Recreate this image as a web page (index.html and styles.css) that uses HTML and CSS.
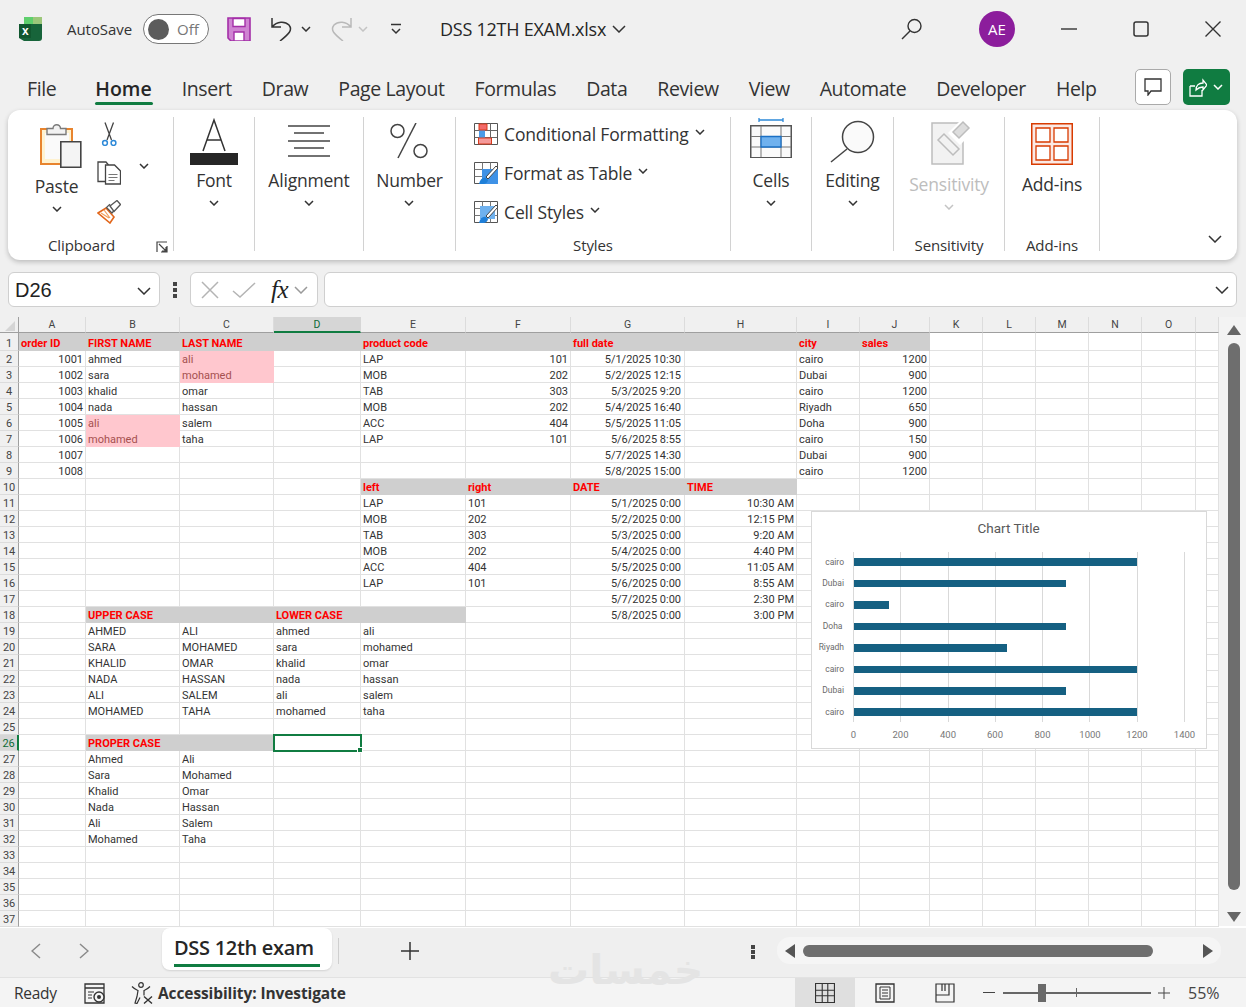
FILE: index.html
```html
<!DOCTYPE html>
<html lang="en">
<head>
<meta charset="utf-8">
<title>DSS 12TH EXAM.xlsx</title>
<link rel="stylesheet" href="styles.css">
</head>
<body>
<header class="titlebar">
  <svg class="logo" viewBox="0 0 24 24"><path d="M5 0h18v12H5z" fill="#5fcf6d"/><path d="M14 0h9v8h-9z" fill="#9cc77a"/><path d="M0 7h23v14a3 3 0 0 1-3 3H5l-5-3z" fill="#17643a"/><path d="M0 7h12v14H0z" fill="#11572f"/><text x="3" y="18" class="logo-x">x</text></svg>
  <span class="autosave">AutoSave</span>
  <span class="toggle"><i class="knob"></i><span>Off</span></span>
  <svg class="qat save" viewBox="0 0 24 24"><path d="M1 1h22v23H4l-3-3z" fill="#cf84d2" stroke="#a42fa8" stroke-width="1.6"/><path d="M6 1.5h12v8H6z" fill="#fff" stroke="#a42fa8" stroke-width="1.4"/><path d="M7 15h10v9H7z" fill="#fff" stroke="#a42fa8" stroke-width="1.4"/></svg>
  <svg class="qat undo" viewBox="0 0 24 24"><path d="M2 1v9h9M2 10c5-6 13-6 17-2 4 5 0 9-9 16" fill="none" stroke="#333" stroke-width="1.5"/></svg>
  <svg class="chev qc1" viewBox="0 0 10 6"><path d="M1 1l4 4 4-4"/></svg>
  <svg class="qat redo" viewBox="0 0 24 24"><path d="M22 1v9h-9M22 10c-5-6-13-6-17-2-4 5 0 9 9 16" fill="none" stroke="#b9b9b9" stroke-width="1.5"/></svg>
  <svg class="chev dim qc2" viewBox="0 0 10 6"><path d="M1 1l4 4 4-4"/></svg>
  <svg class="custom" viewBox="0 0 12 12"><path d="M1 1.5h10M2 6l4 4 4-4" fill="none" stroke="#333" stroke-width="1.5"/></svg>
  <span class="docname">DSS 12TH EXAM.xlsx</span>
  <svg class="chev big-chev" viewBox="0 0 14 8"><path d="M1 1l6 6 6-6"/></svg>
  <svg class="search" viewBox="0 0 22 22"><circle cx="13.5" cy="8" r="6.5" fill="none" stroke="#333" stroke-width="1.4"/><path d="M9 13l-8 8" stroke="#333" stroke-width="1.4"/></svg>
  <span class="avatar">AE</span>
  <svg class="win w-min" viewBox="0 0 16 16"><path d="M0 8h16" stroke="#333" stroke-width="1.4"/></svg>
  <svg class="win w-max" viewBox="0 0 16 16"><rect x="1" y="1" width="14" height="14" rx="2" fill="none" stroke="#333" stroke-width="1.5"/></svg>
  <svg class="win w-close" viewBox="0 0 16 16"><path d="M0.5 0.5l15 15M15.500 0.5l-15 15" stroke="#333" stroke-width="1.4"/></svg>
</header>

<nav class="tabs">
  <a>File</a><a class="on">Home</a><a>Insert</a><a>Draw</a><a>Page Layout</a><a>Formulas</a><a>Data</a><a>Review</a><a>View</a><a>Automate</a><a>Developer</a><a>Help</a>
  <button class="comment"><svg viewBox="0 0 18 18"><path d="M1 1h16v12H7l-3 4v-4H1z" fill="none" stroke="#333" stroke-width="1.3"/></svg></button>
  <button class="share"><svg class="sh" viewBox="0 0 18 20"><path d="M1 9h5M1 9v10h12v-6M7 13c0-5 3-7 7-7V3l4 5-4 5V10c-3 0-5 1-7 3z" fill="none" stroke="#fff" stroke-width="1.3"/></svg><svg class="chev white" viewBox="0 0 10 6"><path d="M1 1l4 4 4-4"/></svg></button>
</nav>

<section class="ribbon">
  <div class="grp g-clip">
    <div class="clip-row">
      <div class="paste">
        <svg class="i-paste" viewBox="38 122 44 47"><path d="M41 129h31v35H41z" fill="#fff2d0" stroke="#e8842e" stroke-width="2"/><path d="M45 133h24v26H45z" fill="#fafafa"/><path d="M47 134.500v-6h6a3.500 3.500 0 0 1 7.500 0h5.500v6z" fill="#f2f2f2" stroke="#7a7a7a" stroke-width="1.400"/><path d="M60.800 141.800h20v25.500h-20z" fill="#f4f4f4" stroke="#444" stroke-width="1.600"/></svg>
        <span class="blabel">Paste</span>
        <svg class="chev" viewBox="0 0 10 6"><path d="M1 1l4 4 4-4"/></svg>
      </div>
      <div class="clip-small">
        <svg class="i-s" viewBox="97 122 24 24"><path d="M105 122.500l6.500 17.500M113.500 122.500L107 140" stroke="#444" stroke-width="1.300" fill="none"/><circle cx="105" cy="143" r="2.400" fill="none" stroke="#2d89d8" stroke-width="1.500"/><circle cx="113.500" cy="143" r="2.400" fill="none" stroke="#2d89d8" stroke-width="1.500"/></svg>
        <svg class="i-s" viewBox="97 161 24 24"><path d="M105 181.500h-7v-19.500h8l2.500 3" fill="none" stroke="#444" stroke-width="1.300"/><path d="M105.500 165h9l6 6v13h-15z" fill="#fff" stroke="#444" stroke-width="1.300"/><path d="M108.500 174.500h9M108.500 177.500h9M108.500 180.500h6" stroke="#777"/></svg>
        <svg class="i-s" viewBox="97 199 24 24"><path d="M98 212l8-5 8 9-4 6z" fill="#fff" stroke="#e2661a" stroke-width="1.600"/><path d="M101 212l8 5M104 209l6 8" stroke="#f0a060" stroke-width="1.200"/><path d="M106.500 206.500l3-3 5 5.500-2.500 3z" fill="#fff" stroke="#555" stroke-width="1.200"/><path d="M110 205l7-5.500 3.500 4-6.500 7z" fill="#fff" stroke="#555" stroke-width="1.300"/></svg>
      </div>
      <svg class="chev clip-chev" viewBox="0 0 10 6"><path d="M1 1l4 4 4-4"/></svg>
    </div>
    <span class="glabel clip-label">Clipboard</span>
    <svg class="launch" viewBox="0 0 12 12"><path d="M1 11V1h10M11 5v6H5M3 3l7 7M10 6v4H6" fill="none" stroke="#444" stroke-width="1.200"/></svg>
  </div>

  <div class="grp g-font">
    <div class="bigbtn">
      <svg class="i-font" viewBox="0 0 48 47"><path d="M13 33L24 2l11 31M17 22h14" fill="none" stroke="#333" stroke-width="1.500"/><rect y="35" width="48" height="12" fill="#262626"/></svg>
      <span class="blabel">Font</span>
      <svg class="chev" viewBox="0 0 10 6"><path d="M1 1l4 4 4-4"/></svg>
    </div>
  </div>

  <div class="grp g-align">
    <div class="bigbtn">
      <svg class="i-align" viewBox="0 0 42 32"><path d="M0 1h42M6 8h30M0 16h42M6 23h30M0 31h42" stroke="#444" stroke-width="1.300"/></svg>
      <span class="blabel">Alignment</span>
      <svg class="chev" viewBox="0 0 10 6"><path d="M1 1l4 4 4-4"/></svg>
    </div>
  </div>

  <div class="grp g-num">
    <div class="bigbtn">
      <svg class="i-num" viewBox="0 0 38 36"><circle cx="7.500" cy="8" r="6.500" fill="none" stroke="#444" stroke-width="1.500"/><circle cx="30.500" cy="28" r="6.500" fill="none" stroke="#444" stroke-width="1.500"/><path d="M26 0L8 35" stroke="#444" stroke-width="1.500"/></svg>
      <span class="blabel">Number</span>
      <svg class="chev" viewBox="0 0 10 6"><path d="M1 1l4 4 4-4"/></svg>
    </div>
  </div>

  <div class="grp g-styles">
    <div class="style-list">
      <div class="sitem">
        <svg class="i-st" viewBox="0 0 24 22"><path d="M.5.500h23v21H.5z" fill="#fff" stroke="#555"/><path d="M8.500.5v21M16.500.5v21M.5 7.500h23M.5 14.500h23" stroke="#666"/><path d="M5 4h6v14H5z" fill="#4a9be8"/><path d="M5 1h8v6H5z" fill="#f26a6a" stroke="#d83b1c"/><path d="M4.500 15h13v6h-13z" fill="#f59a9a" stroke="#d83b1c"/></svg>
        <span>Conditional Formatting</span>
        <svg class="chev" viewBox="0 0 10 6"><path d="M1 1l4 4 4-4"/></svg>
      </div>
      <div class="sitem">
        <svg class="i-st" viewBox="0 0 24 22"><path d="M.5.500h23v21H.5z" fill="#fff" stroke="#555"/><path d="M8.500.5v21M16.500.5v21M.5 7.500h23M.5 14.500h23" stroke="#777"/><path d="M8 7h16v15H8z" fill="#3f92e6"/><path d="M12 15L22 4l2 2-10 11z" fill="#fff" stroke="#444"/><path d="M5 22c1-5 4-7 7-6l2 2c0 3-4 5-9 4z" fill="#1f7fd8"/></svg>
        <span>Format as Table</span>
        <svg class="chev" viewBox="0 0 10 6"><path d="M1 1l4 4 4-4"/></svg>
      </div>
      <div class="sitem">
        <svg class="i-st" viewBox="0 0 24 22"><path d="M.5.500h23v21H.5z" fill="#fff" stroke="#555"/><path d="M8.500.5v21M16.500.5v21M.5 7.500h23M.5 14.500h23" stroke="#777"/><path d="M6 5h15v13H6z" fill="#6fb1ee"/><path d="M12 15L22 4l2 2-10 11z" fill="#fff" stroke="#444"/><path d="M5 22c1-5 4-7 7-6l2 2c0 3-4 5-9 4z" fill="#1f7fd8"/></svg>
        <span>Cell Styles</span>
        <svg class="chev" viewBox="0 0 10 6"><path d="M1 1l4 4 4-4"/></svg>
      </div>
    </div>
    <span class="glabel">Styles</span>
  </div>

  <div class="grp g-cells">
    <div class="bigbtn">
      <svg class="i-cells" viewBox="0 0 42 41"><path d="M9 3h24M9 1v4M33 1v4" stroke="#2d89d8" stroke-width="1.300"/><path d="M.75 8.750h40.500v32H.75z" fill="#fafafa" stroke="#555" stroke-width="1.500"/><path d="M11 9v31M31 9v31M1 19.500h40M1 30h40" stroke="#777"/><path d="M11 19.500h20V30H11z" fill="#6fb1ee" stroke="#1a6fc4" stroke-width="1.300"/></svg>
      <span class="blabel">Cells</span>
      <svg class="chev" viewBox="0 0 10 6"><path d="M1 1l4 4 4-4"/></svg>
    </div>
  </div>

  <div class="grp g-edit">
    <div class="bigbtn">
      <svg class="i-edit" viewBox="0 0 46 43"><circle cx="28" cy="17" r="15.500" fill="#fafafa" stroke="#444" stroke-width="1.500"/><path d="M17 29L1 42" stroke="#444" stroke-width="1.500"/></svg>
      <span class="blabel">Editing</span>
      <svg class="chev" viewBox="0 0 10 6"><path d="M1 1l4 4 4-4"/></svg>
    </div>
  </div>

  <div class="grp g-sens">
    <div class="bigbtn lower">
      <svg class="i-sens" viewBox="0 0 42 45"><path d="M1 3h31v41H1z" fill="#f2f2f2" stroke="#bdbdbd" stroke-width="1.500"/><path d="M7 20l6-6 15 15-6 6z" fill="none" stroke="#bdbdbd" stroke-width="1.500"/><path d="M17 13l13-13 12 12-13 13z" fill="#fff"/><path d="M22 12L32 2l6 6-10 10z" fill="#ddd" stroke="#bdbdbd" stroke-width="1.500"/></svg>
      <span class="blabel muted">Sensitivity</span>
      <svg class="chev dim" viewBox="0 0 10 6"><path d="M1 1l4 4 4-4"/></svg>
    </div>
    <span class="glabel">Sensitivity</span>
  </div>

  <div class="grp g-add">
    <div class="bigbtn lower">
      <svg class="i-add" viewBox="0 0 42 42"><rect x=".75" y=".75" width="40.500" height="40.500" fill="#fbe9e4" stroke="#d83b01" stroke-width="1.500"/><path d="M5 5h14v14H5zM23 5h14v14H23zM5 23h14v14H5zM23 23h14v14H23z" fill="#fff" stroke="#d83b01" stroke-width="1.300"/></svg>
      <span class="blabel">Add-ins</span>
    </div>
    <span class="glabel">Add-ins</span>
  </div>
  <svg class="chev collapse" viewBox="0 0 14 8"><path d="M1 1l6 6 6-6"/></svg>
</section>

<section class="formula">
  <div class="namebox"><span>D26</span><svg class="chev fchev" viewBox="0 0 14 8"><path d="M1 1l6 6 6-6"/></svg></div>
  <span class="vdots"><i></i><i></i><i></i></span>
  <div class="fxbox">
    <svg class="fx-x" viewBox="0 0 18 18"><path d="M1 1l16 16M17 1L1 17" stroke="#b4b4b4" stroke-width="1.500"/></svg>
    <svg class="fx-c" viewBox="0 0 24 16"><path d="M1 9l7 6L23 1" fill="none" stroke="#b4b4b4" stroke-width="1.500"/></svg>
    <span class="fx-t">fx</span>
    <svg class="chev dim2" viewBox="0 0 14 8"><path d="M1 1l6 6 6-6"/></svg>
  </div>
  <div class="finput"><svg class="chev fchev" viewBox="0 0 14 8"><path d="M1 1l6 6 6-6"/></svg></div>
</section>

<section class="sheet">
  <table class="grid">
    <colgroup><col class="c0"><col class="ca"><col class="cb"><col class="cc"><col class="cd"><col class="ce"><col class="cf"><col class="cg"><col class="ch"><col class="ci"><col class="cj"><col class="ck"><col class="cl"><col class="cm"><col class="cn"><col class="co"><col class="cp"></colgroup>
    <thead><tr><th class="corner"><svg viewBox="0 0 10 10"><path d="M10 0v10H0z" fill="#d5d5d5"/></svg></th><th>A</th><th>B</th><th>C</th><th class="sel">D</th><th>E</th><th>F</th><th>G</th><th>H</th><th>I</th><th>J</th><th>K</th><th>L</th><th>M</th><th>N</th><th>O</th><th></th></tr></thead>
    <tbody>
      <tr class="first"><th>1</th><td class="h">order ID</td><td class="h">FIRST NAME</td><td class="h">LAST NAME</td><td class="h"></td><td class="h">product code</td><td class="h"></td><td class="h">full date</td><td class="h"></td><td class="h">city</td><td class="h">sales</td><td></td><td></td><td></td><td></td><td></td><td></td></tr>
      <tr><th>2</th><td class="n">1001</td><td>ahmed</td><td class="p">ali</td><td></td><td>LAP</td><td class="n">101</td><td class="n">5/1/2025 10:30</td><td></td><td>cairo</td><td class="n">1200</td><td></td><td></td><td></td><td></td><td></td><td></td></tr>
      <tr><th>3</th><td class="n">1002</td><td>sara</td><td class="p">mohamed</td><td></td><td>MOB</td><td class="n">202</td><td class="n">5/2/2025 12:15</td><td></td><td>Dubai</td><td class="n">900</td><td></td><td></td><td></td><td></td><td></td><td></td></tr>
      <tr><th>4</th><td class="n">1003</td><td>khalid</td><td>omar</td><td></td><td>TAB</td><td class="n">303</td><td class="n">5/3/2025 9:20</td><td></td><td>cairo</td><td class="n">1200</td><td></td><td></td><td></td><td></td><td></td><td></td></tr>
      <tr><th>5</th><td class="n">1004</td><td>nada</td><td>hassan</td><td></td><td>MOB</td><td class="n">202</td><td class="n">5/4/2025 16:40</td><td></td><td>Riyadh</td><td class="n">650</td><td></td><td></td><td></td><td></td><td></td><td></td></tr>
      <tr><th>6</th><td class="n">1005</td><td class="p">ali</td><td>salem</td><td></td><td>ACC</td><td class="n">404</td><td class="n">5/5/2025 11:05</td><td></td><td>Doha</td><td class="n">900</td><td></td><td></td><td></td><td></td><td></td><td></td></tr>
      <tr><th>7</th><td class="n">1006</td><td class="p">mohamed</td><td>taha</td><td></td><td>LAP</td><td class="n">101</td><td class="n">5/6/2025 8:55</td><td></td><td>cairo</td><td class="n">150</td><td></td><td></td><td></td><td></td><td></td><td></td></tr>
      <tr><th>8</th><td class="n">1007</td><td></td><td></td><td></td><td></td><td></td><td class="n">5/7/2025 14:30</td><td></td><td>Dubai</td><td class="n">900</td><td></td><td></td><td></td><td></td><td></td><td></td></tr>
      <tr><th>9</th><td class="n">1008</td><td></td><td></td><td></td><td></td><td></td><td class="n">5/8/2025 15:00</td><td></td><td>cairo</td><td class="n">1200</td><td></td><td></td><td></td><td></td><td></td><td></td></tr>
      <tr><th>10</th><td></td><td></td><td></td><td></td><td class="h">left</td><td class="h">right</td><td class="h">DATE</td><td class="h">TIME</td><td></td><td></td><td></td><td></td><td></td><td></td><td></td><td></td></tr>
      <tr><th>11</th><td></td><td></td><td></td><td></td><td>LAP</td><td>101</td><td class="n">5/1/2025 0:00</td><td class="n">10:30 AM</td><td></td><td></td><td></td><td></td><td></td><td></td><td></td><td></td></tr>
      <tr><th>12</th><td></td><td></td><td></td><td></td><td>MOB</td><td>202</td><td class="n">5/2/2025 0:00</td><td class="n">12:15 PM</td><td></td><td></td><td></td><td></td><td></td><td></td><td></td><td></td></tr>
      <tr><th>13</th><td></td><td></td><td></td><td></td><td>TAB</td><td>303</td><td class="n">5/3/2025 0:00</td><td class="n">9:20 AM</td><td></td><td></td><td></td><td></td><td></td><td></td><td></td><td></td></tr>
      <tr><th>14</th><td></td><td></td><td></td><td></td><td>MOB</td><td>202</td><td class="n">5/4/2025 0:00</td><td class="n">4:40 PM</td><td></td><td></td><td></td><td></td><td></td><td></td><td></td><td></td></tr>
      <tr><th>15</th><td></td><td></td><td></td><td></td><td>ACC</td><td>404</td><td class="n">5/5/2025 0:00</td><td class="n">11:05 AM</td><td></td><td></td><td></td><td></td><td></td><td></td><td></td><td></td></tr>
      <tr><th>16</th><td></td><td></td><td></td><td></td><td>LAP</td><td>101</td><td class="n">5/6/2025 0:00</td><td class="n">8:55 AM</td><td></td><td></td><td></td><td></td><td></td><td></td><td></td><td></td></tr>
      <tr><th>17</th><td></td><td></td><td></td><td></td><td></td><td></td><td class="n">5/7/2025 0:00</td><td class="n">2:30 PM</td><td></td><td></td><td></td><td></td><td></td><td></td><td></td><td></td></tr>
      <tr><th>18</th><td></td><td class="h">UPPER CASE</td><td class="h"></td><td class="h">LOWER CASE</td><td class="h"></td><td></td><td class="n">5/8/2025 0:00</td><td class="n">3:00 PM</td><td></td><td></td><td></td><td></td><td></td><td></td><td></td><td></td></tr>
      <tr><th>19</th><td></td><td>AHMED</td><td>ALI</td><td>ahmed</td><td>ali</td><td></td><td></td><td></td><td></td><td></td><td></td><td></td><td></td><td></td><td></td><td></td></tr>
      <tr><th>20</th><td></td><td>SARA</td><td>MOHAMED</td><td>sara</td><td>mohamed</td><td></td><td></td><td></td><td></td><td></td><td></td><td></td><td></td><td></td><td></td><td></td></tr>
      <tr><th>21</th><td></td><td>KHALID</td><td>OMAR</td><td>khalid</td><td>omar</td><td></td><td></td><td></td><td></td><td></td><td></td><td></td><td></td><td></td><td></td><td></td></tr>
      <tr><th>22</th><td></td><td>NADA</td><td>HASSAN</td><td>nada</td><td>hassan</td><td></td><td></td><td></td><td></td><td></td><td></td><td></td><td></td><td></td><td></td><td></td></tr>
      <tr><th>23</th><td></td><td>ALI</td><td>SALEM</td><td>ali</td><td>salem</td><td></td><td></td><td></td><td></td><td></td><td></td><td></td><td></td><td></td><td></td><td></td></tr>
      <tr><th>24</th><td></td><td>MOHAMED</td><td>TAHA</td><td>mohamed</td><td>taha</td><td></td><td></td><td></td><td></td><td></td><td></td><td></td><td></td><td></td><td></td><td></td></tr>
      <tr><th>25</th><td></td><td></td><td></td><td></td><td></td><td></td><td></td><td></td><td></td><td></td><td></td><td></td><td></td><td></td><td></td><td></td></tr>
      <tr><th class="sel-row">26</th><td></td><td class="h">PROPER CASE</td><td class="h"></td><td class="active"></td><td></td><td></td><td></td><td></td><td></td><td></td><td></td><td></td><td></td><td></td><td></td><td></td></tr>
      <tr><th>27</th><td></td><td>Ahmed</td><td>Ali</td><td></td><td></td><td></td><td></td><td></td><td></td><td></td><td></td><td></td><td></td><td></td><td></td><td></td></tr>
      <tr><th>28</th><td></td><td>Sara</td><td>Mohamed</td><td></td><td></td><td></td><td></td><td></td><td></td><td></td><td></td><td></td><td></td><td></td><td></td><td></td></tr>
      <tr><th>29</th><td></td><td>Khalid</td><td>Omar</td><td></td><td></td><td></td><td></td><td></td><td></td><td></td><td></td><td></td><td></td><td></td><td></td><td></td></tr>
      <tr><th>30</th><td></td><td>Nada</td><td>Hassan</td><td></td><td></td><td></td><td></td><td></td><td></td><td></td><td></td><td></td><td></td><td></td><td></td><td></td></tr>
      <tr><th>31</th><td></td><td>Ali</td><td>Salem</td><td></td><td></td><td></td><td></td><td></td><td></td><td></td><td></td><td></td><td></td><td></td><td></td><td></td></tr>
      <tr><th>32</th><td></td><td>Mohamed</td><td>Taha</td><td></td><td></td><td></td><td></td><td></td><td></td><td></td><td></td><td></td><td></td><td></td><td></td><td></td></tr>
      <tr><th>33</th><td></td><td></td><td></td><td></td><td></td><td></td><td></td><td></td><td></td><td></td><td></td><td></td><td></td><td></td><td></td><td></td></tr>
      <tr><th>34</th><td></td><td></td><td></td><td></td><td></td><td></td><td></td><td></td><td></td><td></td><td></td><td></td><td></td><td></td><td></td><td></td></tr>
      <tr><th>35</th><td></td><td></td><td></td><td></td><td></td><td></td><td></td><td></td><td></td><td></td><td></td><td></td><td></td><td></td><td></td><td></td></tr>
      <tr><th>36</th><td></td><td></td><td></td><td></td><td></td><td></td><td></td><td></td><td></td><td></td><td></td><td></td><td></td><td></td><td></td><td></td></tr>
      <tr><th>37</th><td></td><td></td><td></td><td></td><td></td><td></td><td></td><td></td><td></td><td></td><td></td><td></td><td></td><td></td><td></td><td></td></tr>
    </tbody>
  </table>

  <svg class="chart" viewBox="811 511 396 238">
    <rect x="811.500" y="511.500" width="395" height="237" fill="#fff" stroke="#d9d9d9"/>
    <text x="1008.500" y="533" class="ct">Chart Title</text>
    <g stroke="#d9d9d9">
      <path d="M853.500 552v170M900.500 552v170M948.500 552v170M995.500 552v170M1042.500 552v170M1089.500 552v170M1137.500 552v170M1184.500 552v170"/>
    </g>
    <g fill="#156082">
      <rect x="854" y="558" width="283" height="8"/>
      <rect x="854" y="580" width="212" height="7"/>
      <rect x="854" y="601" width="35" height="8"/>
      <rect x="854" y="623" width="212" height="7"/>
      <rect x="854" y="644" width="153" height="8"/>
      <rect x="854" y="666" width="283" height="7"/>
      <rect x="854" y="687" width="212" height="8"/>
      <rect x="854" y="708" width="283" height="8"/>
    </g>
    <g class="cy">
      <text x="844" y="565">cairo</text><text x="844" y="586">Dubai</text><text x="844" y="607">cairo</text><text x="842.500" y="629">Doha</text><text x="844" y="650">Riyadh</text><text x="844" y="672">cairo</text><text x="844" y="693">Dubai</text><text x="844" y="715">cairo</text>
    </g>
    <g class="cx">
      <text x="853.500" y="738">0</text><text x="900.500" y="738">200</text><text x="948" y="738">400</text><text x="995" y="738">600</text><text x="1042.500" y="738">800</text><text x="1090" y="738">1000</text><text x="1137" y="738">1200</text><text x="1184.500" y="738">1400</text>
    </g>
  </svg>

  <aside class="vscroll">
    <svg class="arrow" viewBox="0 0 14 10"><path d="M7 0l7 10H0z"/></svg>
    <i class="vthumb"></i>
    <svg class="arrow" viewBox="0 0 14 10"><path d="M7 10L0 0h14z"/></svg>
  </aside>
</section>

<section class="tabbar">
  <svg class="nav n1" viewBox="0 0 10 16"><path d="M9 1L1 8l8 7" fill="none" stroke="#8a8a8a" stroke-width="1.500"/></svg>
  <svg class="nav n2" viewBox="0 0 10 16"><path d="M1 1l8 7-8 7" fill="none" stroke="#8a8a8a" stroke-width="1.500"/></svg>
  <div class="sheettab"><span>DSS 12th exam</span></div>
  <i class="tabsep"></i>
  <svg class="plus" viewBox="0 0 18 18"><path d="M9 0v18M0 9h18" stroke="#333" stroke-width="1.500"/></svg>
  <span class="wm">خمسات</span>
  <span class="vdots v2"><i></i><i></i><i></i></span>
  <div class="hscroll">
    <svg class="harrow" viewBox="0 0 10 14"><path d="M0 7l10-7v14z"/></svg>
    <i class="hthumb"></i>
    <svg class="harrow" viewBox="0 0 10 14"><path d="M10 7L0 14V0z"/></svg>
  </div>
</section>

<footer class="status">
  <span class="ready">Ready</span>
  <svg class="st-ic macro" viewBox="0 0 22 22"><path d="M1 2h19v19H1zM1 6h19" fill="none" stroke="#333" stroke-width="1.300"/><path d="M4 10h6M4 13h4M4 16h4" stroke="#333"/><circle cx="15" cy="15" r="5" fill="#f3f3f3" stroke="#333" stroke-width="1.400"/><circle cx="15" cy="15" r="2" fill="#333"/></svg>
  <svg class="st-ic acc" viewBox="0 0 22 22"><circle cx="10" cy="3" r="2.300" fill="none" stroke="#333" stroke-width="1.200"/><path d="M1 4.500c3 3 5 3.500 6 4l-1 6-2 6.500 2 .5 3-6M19 4.500c-3 3-5 3.500-6 4v5" fill="none" stroke="#333" stroke-width="1.200"/><path d="M13 14.500l8 7M21 14.500l-8 7" stroke="#333" stroke-width="1.400"/></svg>
  <strong class="acc-t">Accessibility: Investigate</strong>
  <div class="views">
    <span class="view on"><svg viewBox="0 0 18 18"><path d="M.5.500h17v17H.5zM6.500.5v17M11.500.5v17M.5 6.500h17M.5 11.500h17" fill="none" stroke="#333"/></svg></span>
    <span class="view"><svg viewBox="0 0 20 20"><path d="M1 1h18v18H1z" fill="none" stroke="#333" stroke-width="1.300"/><path d="M5 4h10v12H5z" fill="none" stroke="#333"/><path d="M7 7h6M7 10h6M7 13h6" stroke="#333"/></svg></span>
    <span class="view"><svg viewBox="0 0 20 20"><path d="M1 1h18v18H1zM1 12h13V1M7 1v7M10 1v7" fill="none" stroke="#333" stroke-width="1.200"/></svg></span>
  </div>
  <div class="zoom">
    <i class="zm"></i>
    <div class="slider"><i class="sthumb"></i><i class="stick"></i></div>
    <svg class="zp" viewBox="0 0 12 12"><path d="M6 0v12M0 6h12" stroke="#444"/></svg>
    <span class="pct">55%</span>
  </div>
</footer>
</body>
</html>
```

FILE: styles.css
```css
* { box-sizing: border-box; }
html, body { margin: 0; padding: 0; }
body {
  width: 1246px; height: 1007px; overflow: hidden; background: #f0f0f0;
  font-family: "Open Sans", "Noto Sans", sans-serif; color: #262626;
  display: flex; flex-direction: column; position: relative;
}
.chev { width: 10px; height: 6px; fill: none; stroke: #333; stroke-width: 1.500; flex: none; display: block; }
.chev.dim { stroke: #c4c4c4; }
.chev.dim2 { stroke: #9a9a9a; width: 14px; height: 8px; margin-left: 6px; }
.chev.white { stroke: #fff; }

/* title bar */
.titlebar { height: 58px; display: flex; align-items: center; flex: none; }
.logo { width: 24px; height: 24px; margin-left: 19px; margin-top: 0; }
.logo-x { font: 700 12px "Liberation Sans", sans-serif; fill: #fff; }
.autosave { margin-left: 24px; font-size: 15px; color: #333; letter-spacing: -.05px; width: 76px; }
.toggle { width: 66px; height: 30px; border: 1px solid #777; border-radius: 15px; background: #fff; display: flex; align-items: center; padding-left: 4px; font-size: 15px; color: #777; }
.toggle span { margin-left: 8px; }
.knob { width: 21px; height: 21px; border-radius: 50%; background: #5c5c5c; }
.qat { width: 24px; height: 24px; }
.save { margin-left: 18px; }
.undo { margin-left: 19px; }
.qc1 { margin-left: 7px; }
.redo { margin-left: 18px; }
.qc2 { margin-left: 5px; }
.custom { width: 12px; height: 12px; margin-left: 22px; }
.docname { margin-left: 38px; font-size: 18px; letter-spacing: -.25px; color: #262626; width: 172px; white-space: nowrap; }
.big-chev { width: 14px; height: 8px; }
.search { width: 22px; height: 22px; margin-left: 275px; }
.avatar { width: 36px; height: 36px; border-radius: 50%; background: #8c1d9c; color: #fff; font-size: 15px; display: flex; align-items: center; justify-content: center; margin-left: 56px; margin-top: 0; }
.win { width: 16px; height: 16px; }
.w-min { margin-left: 46px; }
.w-max { margin-left: 56px; }
.w-close { margin-left: 56px; }

/* tabs */
.tabs { height: 52px; display: flex; align-items: center; flex: none; padding: 15px 0 5px 27px; gap: 30px; font-size: 19.500px; color: #333; }
.tabs a { position: relative; line-height: 30px; letter-spacing: -.4px; white-space: nowrap; }
.tabs a.on { font-weight: 600; color: #262626; margin-left: 9px; letter-spacing: 0; }
.tabs a.on::after { content: ""; position: absolute; left: 0; right: -1px; bottom: -1px; height: 3px; background: #107c41; border-radius: 2px; }
.comment, .share { height: 36px; padding: 0; display: flex; align-items: center; justify-content: center; border-radius: 5px; margin-top: -4px; }
.comment { width: 36px; background: #fff; border: 1px solid #aaa; margin-left: 8px; }
.comment svg { width: 18px; height: 18px; }
.share { width: 47px; background: #107c41; border: 0; margin-left: -18px; gap: 6px; }
.sh { width: 18px; height: 20px; }

/* ribbon */
.ribbon { height: 150px; margin: 0 9px 0 8px; background: #fff; border-radius: 12px; box-shadow: 0 2px 5px rgba(0,0,0,.22); display: flex; flex: none; position: relative; }
.grp { height: 134px; margin-top: 7px; border-right: 1px solid #d2d2d2; display: flex; flex-direction: column; align-items: center; position: relative; flex: none; font-size: 17.500px; }
.glabel { margin-top: auto; margin-bottom: -4px; height: 20px; line-height: 20px; font-size: 15px; color: #333; white-space: nowrap; letter-spacing: -.1px; }
.clip-label { margin-right: 18px; }
.blabel { line-height: 24px; color: #333; white-space: nowrap; letter-spacing: -.2px; }
.blabel.muted { color: #bdbdbd; }
.bigbtn { display: flex; flex-direction: column; align-items: center; }
.bigbtn .chev { margin-top: 8px; }
.g-clip { width: 166px; }
.g-font { width: 81px; }
.g-align { width: 109px; }
.g-num { width: 92px; }
.g-styles { width: 275px; }
.g-cells { width: 81px; }
.g-edit { width: 82px; }
.g-sens { width: 111px; }
.g-add { width: 95px; }
.clip-row { display: flex; width: 100%; padding-left: 8px; }
.paste { width: 81px; display: flex; flex-direction: column; align-items: center; padding-top: 5px; }
.i-paste { width: 44px; height: 47px; margin-left: 7px; }
.paste .blabel { margin-top: 5px; }
.paste .chev { margin-top: 8px; }
.clip-small { display: flex; flex-direction: column; padding-top: 5px; gap: 15px; }
.i-s { width: 24px; height: 24px; display: block; }
.clip-chev { margin-left: 18px; margin-top: 46px; }
.launch { position: absolute; right: 5px; bottom: -2px; width: 12px; height: 12px; }
.i-font { width: 48px; height: 47px; margin-top: 1px; margin-bottom: 3px; }
.i-align { width: 42px; height: 32px; margin-top: 8px; margin-bottom: 11px; }
.i-num { width: 38px; height: 36px; margin-top: 6px; margin-bottom: 9px; }
.i-cells { width: 42px; height: 41px; margin-top: 0; margin-bottom: 10px; }
.i-edit { width: 46px; height: 43px; margin-top: 3px; margin-bottom: 5px; }
.i-sens { width: 42px; height: 45px; margin-top: 3px; margin-bottom: 7px; margin-left: 7px; }
.i-add { width: 42px; height: 42px; margin-top: 6px; margin-bottom: 7px; }
.style-list { align-self: flex-start; padding: 3px 0 0 18px; display: flex; flex-direction: column; gap: 12px; }
.sitem { display: flex; align-items: center; height: 27px; font-size: 17.500px; color: #333; letter-spacing: -.14px; white-space: nowrap; }
.i-st { width: 24px; height: 22px; margin-right: 6px; }
.sitem .chev { margin-left: 6px; margin-top: -3px; }
.collapse { position: absolute; right: 15px; bottom: 17px; width: 14px; height: 8px; }

/* formula bar */
.formula { height: 35px; margin: 12px 9px 0 8px; display: flex; flex: none; }
.namebox, .fxbox, .finput { background: #fff; border: 1px solid #cfcfcf; border-radius: 6px; display: flex; align-items: center; }
.namebox { width: 152px; padding: 2px 0 0 6px; font: 20px "Liberation Sans", sans-serif; color: #222; }
.fchev { width: 14px; height: 8px; margin-left: auto; margin-right: 8px; }
.finput .fchev { margin-right: 7px; }
.vdots { width: 4px; display: flex; flex-direction: column; gap: 2px; justify-content: center; margin-left: 13px; }
.vdots i { width: 4px; height: 4px; background: #444; display: block; }
.fxbox { width: 128px; margin-left: 13px; padding-left: 10px; }
.fx-x { width: 18px; height: 18px; }
.fx-c { width: 24px; height: 16px; margin-left: 13px; }
.fx-t { font: italic 400 25px "Liberation Serif", serif; color: #222; margin-left: 15px; letter-spacing: -.5px; }
.finput { flex: 1; margin-left: 6px; }

/* sheet */
.sheet { height: 611px; margin-top: 10px; flex: none; background: #fff; position: relative; display: flex; }
.grid { border-collapse: separate; border-spacing: 0; table-layout: fixed; width: 1219px; height: 610px; font: 11px Roboto, sans-serif; color: #333; flex: none; }
.c0 { width: 19px; } .ca { width: 67px; } .cb, .cc { width: 94px; } .cd { width: 87px; } .ce, .cf { width: 105px; }
.cg { width: 114px; } .ch { width: 112px; } .ci { width: 63px; } .cj { width: 70px; }
.ck, .cl, .cm, .cn { width: 53px; } .co { width: 54px; } .cp { width: 23px; }
.grid thead th { height: 16px; background: #f0f0f0; border-right: 1px solid #dcdcdc; border-bottom: 1px solid #9f9f9f; font-weight: 400; font-size: 10.500px; padding: 0; color: #444; }
.grid thead th.sel { background: #d6d6d6; color: #0f6b38; border-bottom: 2px solid #107c41; border-right-color: #d6d6d6; }
.grid thead th.corner { padding: 3px 3px 1px 5px; border-right-color: #9f9f9f; }
.corner svg { display: block; width: 10px; height: 10px; }
.grid tbody th { background: #f0f0f0; border-right: 1px solid #9f9f9f; border-bottom: 1px solid #dcdcdc; font-weight: 400; font-size: 11px; line-height: 12px; padding: 3px 0 0; vertical-align: top; text-align: center; color: #444; letter-spacing: -.3px; }
.grid tbody tr.first th { padding-top: 5px; }
.grid tbody th.sel-row { background: #d6d6d6; color: #0f6b38; border-right: 2px solid #107c41; }
.grid tbody tr { height: 16px; }
.grid tbody tr.first { height: 18px; }
.grid td { border-right: 1px solid #e1e1e1; border-bottom: 1px solid #e1e1e1; padding: 3px 2px 0; white-space: nowrap; overflow: hidden; line-height: 12px; height: 16px; position: relative; vertical-align: top; }
.grid tr.first td { padding-top: 5px; }
.grid td.n { text-align: right; }
.grid td:nth-child(8).n { padding-right: 3px; }
.grid td.h { background: #cfcfcf; color: #f00; font-weight: 700; border-color: #cfcfcf; overflow: visible; }
.grid td.p { background: #ffc7ce; color: #a5504f; border-color: #ffc7ce; }
.grid td.active { outline: 2px solid #107c41; outline-offset: -1px; overflow: visible; z-index: 2; }
.grid td.active::after { content: ""; position: absolute; right: -3px; bottom: -3px; background: #107c41; border: 1px solid #fff; box-sizing: content-box; width: 4px; height: 4px; }
.chart { position: absolute; left: 811px; top: 194px; width: 396px; height: 238px; font-family: Roboto, sans-serif; }
.ct { font-size: 13.500px; fill: #595959; text-anchor: middle; }
.cy text { font-size: 8.500px; fill: #6a6a6a; text-anchor: end; }
.cx text { font-size: 9.500px; fill: #777; text-anchor: middle; }
.vscroll { flex: 1; background: #f3f3f3; display: flex; flex-direction: column; align-items: center; padding-top: 8px; padding-left: 3px; margin-bottom: 2px; }
.arrow { width: 14px; height: 10px; fill: #666; flex: none; }
.vthumb { width: 12px; height: 547px; background: #6e6e6e; border-radius: 6px; margin: 8px 0 22px; display: block; flex: none; }

/* sheet tabs */
.tabbar { height: 49px; flex: none; display: flex; align-items: flex-start; position: relative; background: #efefef; }
.nav { width: 10px; height: 16px; margin-top: 15px; }
.n1 { margin-left: 31px; }
.n2 { margin-left: 38px; }
.sheettab { width: 170px; height: 42px; margin-left: 73px; background: #fff; border-radius: 8px; padding: 4px 12px 0; box-shadow: 0 1px 2px rgba(0,0,0,.12); }
.sheettab span { display: block; width: 146px; height: 35px; line-height: 32px; font-size: 20px; font-weight: 600; color: #262626; border-bottom: 3px solid #107c41; letter-spacing: -.3px; white-space: nowrap; }
.tabsep { width: 1px; height: 26px; background: #cfcfcf; margin: 10px 0 0 6px; display: block; }
.plus { width: 18px; height: 18px; margin: 14px 0 0 62px; }
.wm { position: absolute; left: 548px; top: 22px; font: 700 41px "DejaVu Sans", sans-serif; color: #e4e4e4; line-height: 40px; width: 150px; text-align: center; white-space: nowrap; }
.v2 { margin: 17px 0 0 332px; height: 14px; gap: 1px; }
.v2 i { height: 4px; }
.hscroll { width: 444px; height: 27px; margin: 9px 0 0 22px; background: #f5f5f5; border-radius: 13px; display: flex; align-items: center; padding: 0 8px; }
.harrow { width: 10px; height: 14px; fill: #555; flex: none; }
.hthumb { width: 350px; height: 12px; background: #6e6e6e; border-radius: 6px; margin: 0 50px 0 8px; display: block; flex: none; }

/* status bar */
.status { height: 30px; flex: none; background: #f4f4f4; display: flex; align-items: center; border-top: 1px solid #e2e2e2; font-size: 15.500px; }
.ready { margin-left: 14px; width: 70px; color: #333; letter-spacing: -.3px; }
.st-ic { width: 22px; height: 22px; }
.acc { margin-left: 25px; }
.acc-t { margin-left: 5px; font-size: 15.500px; font-weight: 700; color: #333; white-space: nowrap; letter-spacing: -.1px; width: 637px; }
.views { display: flex; height: 100%; }
.view { width: 60px; display: flex; align-items: center; justify-content: center; }
.view.on { background: #dfdfdf; }
.view svg { width: 20px; height: 20px; }
.zoom { display: flex; align-items: center; margin-left: 8px; position: relative; }
.zm { width: 12px; height: 1px; background: #444; display: block; }
.slider { width: 148px; height: 2px; background: #666; margin-left: 8px; position: relative; }
.sthumb { position: absolute; left: 35px; top: -8px; width: 8px; height: 18px; background: #6a6a6a; display: block; }
.stick { position: absolute; left: 73px; top: -4px; width: 1px; height: 9px; background: #666; display: block; }
.zp { width: 12px; height: 12px; margin-left: 7px; }
.pct { margin-left: 18px; color: #444; font-size: 16px; letter-spacing: 0; white-space: nowrap; }
```
